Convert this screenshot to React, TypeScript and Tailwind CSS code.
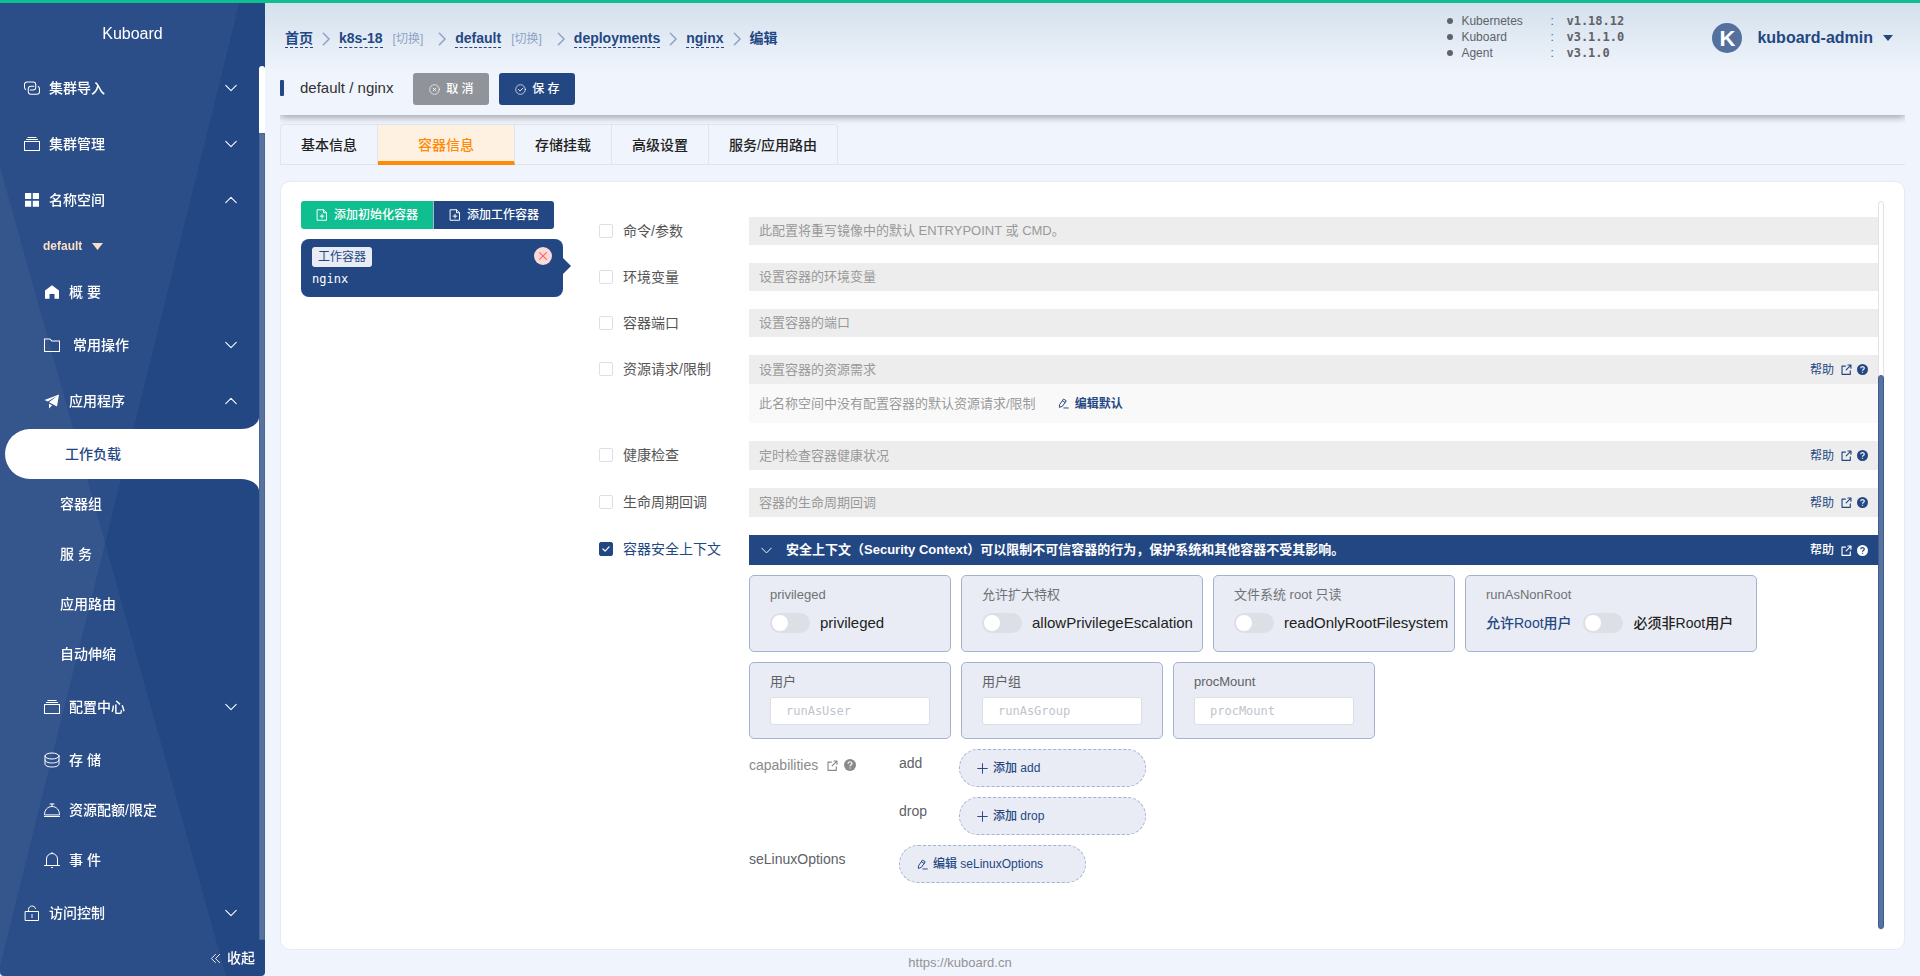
import { Fragment, useState } from "react";
import type { ReactNode } from "react";
import clsx from "clsx";

type IconProps = { className?: string };

/* ---------- icons ---------- */

function Glyph({ d, className }: { d: string; className?: string }) {
  return (
    <svg viewBox="0 0 1024 1024" fill="currentColor" className={clsx("shrink-0", className)} aria-hidden="true">
      <path d={d} />
    </svg>
  );
}

function Line({ children, className }: { children: ReactNode; className?: string }) {
  return (
    <svg
      viewBox="0 0 16 16"
      fill="none"
      stroke="currentColor"
      strokeLinecap="round"
      strokeLinejoin="round"
      className={clsx("shrink-0", className)}
      aria-hidden="true"
    >
      {children}
    </svg>
  );
}

const ConnectionIcon = ({ className }: IconProps) => (
  <Glyph
    className={className}
    d="M656 360v64H448a144 144 0 0 0-144 144v160a144 144 0 0 0 144 144h368a144 144 0 0 0 144-144V568a144 144 0 0 0-72-124V370c84 30 136 110 136 198v160a208 208 0 0 1-208 208H448a208 208 0 0 1-208-208V568a208 208 0 0 1 208-208h208zM368 664v-64h208a144 144 0 0 0 144-144V296a144 144 0 0 0-144-144H208a144 144 0 0 0-144 144v160a144 144 0 0 0 72 124v78A208 208 0 0 1 0 456V296a208 208 0 0 1 208-208h368a208 208 0 0 1 208 208v160a208 208 0 0 1-208 208H368z"
  />
);
const FilesIcon = ({ className }: IconProps) => (
  <Glyph
    className={className}
    d="M64 384v512h896V384H64zm-64-64h1024v640H0V320zm128-128h768v64H128zm96-128h576v64H224z"
  />
);
const MenuIcon = ({ className }: IconProps) => (
  <Glyph className={className} d="M64 64h400v384H64zM560 64h400v384H560zM64 560h400v384H64zM560 560h400v384H560z" />
);
const HomeIcon = ({ className }: IconProps) => (
  <Glyph className={className} d="M512 80 64 420V944h288V640h320v304h288V420z" />
);
const FolderIcon = ({ className }: IconProps) => (
  <Glyph
    className={className}
    d="M64 160v736h896V288H485.76L357.504 160H64zM0 96h383.872l128.384 128H1024v736H0V96z"
  />
);
const PromotionIcon = ({ className }: IconProps) => (
  <Glyph
    className={className}
    d="m32 448 928-352-128 768-510.08-275.328L832 192 242.816 545.472 32 448zm288 544V680l200 110L320 992z"
  />
);
const StackIcon = ({ className }: IconProps) => (
  <Line className={className}>
    <ellipse cx="8" cy="4" rx="7" ry="3" />
    <path d="M1 4v8c0 1.7 3.1 3 7 3s7-1.3 7-3V4M1 8c0 1.7 3.1 3 7 3s7-1.3 7-3" />
  </Line>
);
const DishIcon = ({ className }: IconProps) => (
  <Line className={className}>
    <path d="M.5 12.500C.5 8 3.500 4.500 8 4.500s7.500 3.500 7.500 8zM.5 14.500h15M6 2h4M8 2v2" />
  </Line>
);
const BellIcon = ({ className }: IconProps) => (
  <Line className={className}>
    <path d="M2.500 13V7a5.500 5.500 0 0 1 11 0v6M.5 13.500h15M7.500 15.500h1M8 .5v1" />
  </Line>
);
const UnlockIcon = ({ className }: IconProps) => (
  <Line className={className}>
    <path d="M1.500 6.500h13v9h-13zM4.500 6.500V4.500c0-4 6-5 7-1M8 9.500v3" />
  </Line>
);
const ChevronDown = ({ className }: IconProps) => (
  <Line className={className}>
    <path d="m1 4.500 7 7 7-7" strokeWidth="1.400" />
  </Line>
);
const ChevronRight = ({ className }: IconProps) => (
  <Line className={className}>
    <path d="m5 1.500 6.500 6.500L5 14.500" strokeWidth="1.800" />
  </Line>
);
const DoubleLeft = ({ className }: IconProps) => (
  <Line className={className}>
    <path d="M8 2 2 8l6 6M14 2 8 8l6 6" strokeWidth="1.300" />
  </Line>
);
const CircleClose = ({ className }: IconProps) => (
  <Line className={className}>
    <circle cx="8" cy="8" r="7" />
    <path d="m6 6 4 4M10 6l-4 4" strokeWidth="1.300" />
  </Line>
);
const CircleCheck = ({ className }: IconProps) => (
  <Line className={className}>
    <circle cx="8" cy="8" r="7" />
    <path d="m5 8 2.300 2.300L11.500 6" strokeWidth="1.300" />
  </Line>
);
const DocumentAdd = ({ className }: IconProps) => (
  <Line className={className}>
    <path d="M2 1h8l4 4v10H2zM10 1v4h4M8 7v5M5.500 9.500h5" strokeWidth="1.300" />
  </Line>
);
const CloseIcon = ({ className }: IconProps) => (
  <Line className={className}>
    <path d="m2.500 2.500 11 11M13.500 2.500l-11 11" strokeWidth="1.900" />
  </Line>
);
const PlusIcon = ({ className }: IconProps) => (
  <Line className={className}>
    <path d="M8 1v14M1 8h14" strokeWidth="1.400" />
  </Line>
);
const EditIcon = ({ className }: IconProps) => (
  <Line className={className}>
    <path d="m2.500 9.500 5.500-8 4 2.500-5.500 8-4 1.500zM8.500 14.500H15M6.500 4l4 2.500" strokeWidth="1.400" />
  </Line>
);
const ExternalIcon = ({ className }: IconProps) => (
  <Line className={className}>
    <path d="M6.500 3H1.500v12h12v-5M10 1.500h4.500V6M14 2 7.500 8.500" strokeWidth="1.700" />
  </Line>
);

function QuestionIcon({ className }: IconProps) {
  return (
    <svg viewBox="0 0 16 16" className={clsx("shrink-0", className)} aria-hidden="true">
      <circle cx="8" cy="8" r="8" fill="currentColor" />
      <path
        d="M5.500 6.300C5.500 3 10.500 3 10.500 6.200 10.500 8 8 7.800 8 9.700M8 11.300v1.300"
        fill="none"
        className="stroke-[#ececec]"
        strokeWidth="1.900"
      />
    </svg>
  );
}

function Caret({ className }: IconProps) {
  return (
    <svg viewBox="0 0 10 6" fill="currentColor" preserveAspectRatio="none" className={className} aria-hidden="true">
      <path d="M0 0h10L5 6z" />
    </svg>
  );
}

/* ---------- sidebar ---------- */

type MenuProps = { icon: ReactNode; label: string; nested?: boolean; open?: boolean; leaf?: boolean };

function MenuItem({ icon, label, nested, open, leaf }: MenuProps) {
  return (
    <a
      href="#"
      className={clsx(
        "flex items-center gap-[9px] pr-[22px] text-sm font-medium",
        nested ? "pl-11" : "pl-6",
        leaf ? "h-[50px]" : "h-14",
      )}
    >
      {icon}
      <span className="flex-1">{label}</span>
      {!leaf && <ChevronDown className={clsx("size-3", open && "rotate-180")} />}
    </a>
  );
}

const workloadLinks = ["容器组", "服 务", "应用路由", "自动伸缩"];

function Sidebar() {
  return (
    <aside className="fixed inset-y-0 left-0 z-10 flex w-[265px] flex-col overflow-hidden rounded-b-sm bg-[#234783] text-white">
      <svg viewBox="0 0 265 976" preserveAspectRatio="none" className="absolute inset-0 h-full w-full" aria-hidden="true">
        <path d="M0 0H240L0 966z" fill="#fff" fillOpacity=".045" />
        <path d="M0 167 226 976H0z" fill="#fff" fillOpacity=".045" />
      </svg>
      <div className="relative flex h-[60px] shrink-0 items-center justify-center pt-2 font-medium">Kuboard</div>
      <div className="relative flex min-h-0 flex-1">
        <nav className="min-w-0 flex-1">
          <MenuItem icon={<ConnectionIcon className="size-4" />} label="集群导入" />
          <MenuItem icon={<FilesIcon className="size-4" />} label="集群管理" />
          <MenuItem icon={<MenuIcon className="size-4" />} label="名称空间" open />
          <button className="flex h-[39px] items-center gap-[10px] pb-[3px] pl-[43px] text-xs font-bold text-[#fbdfc5]">
            default
            <Caret className="h-[7px] w-[11px]" />
          </button>
          <MenuItem icon={<HomeIcon className="size-4" />} label="概 要" nested leaf />
          <MenuItem icon={<FolderIcon className="size-4" />} label={"\u00a0常用操作"} nested />
          <MenuItem icon={<PromotionIcon className="size-4" />} label="应用程序" nested open />
          <a
            href="#"
            className="relative ml-[5px] flex h-[50px] items-center rounded-l-full bg-white pl-[60px] text-sm font-medium text-[#234783]"
          >
            工作负载
            <svg viewBox="0 0 18 11" fill="#fff" className="absolute right-0 bottom-full h-[11px] w-[18px]" aria-hidden="true">
              <path d="M0 11C10 11 17 6 18 0V11z" />
            </svg>
            <svg viewBox="0 0 18 11" fill="#fff" className="absolute top-full right-0 h-[11px] w-[18px]" aria-hidden="true">
              <path d="M0 0C10 0 17 5 18 11V0z" />
            </svg>
          </a>
          {workloadLinks.map((label) => (
            <a key={label} href="#" className="flex h-[50px] items-center pl-[60px] text-sm font-medium">
              {label}
            </a>
          ))}
          <MenuItem icon={<FilesIcon className="size-4" />} label="配置中心" nested />
          <MenuItem icon={<StackIcon className="size-4" />} label="存 储" nested leaf />
          <MenuItem icon={<DishIcon className="size-4" />} label="资源配额/限定" nested leaf />
          <MenuItem icon={<BellIcon className="size-4" />} label="事 件" nested leaf />
          <MenuItem icon={<UnlockIcon className="size-4" />} label="访问控制" />
        </nav>
        <div className="mt-[6px] flex w-[6px] flex-col rounded-t-[3px] bg-white">
          <div className="mt-[67px] flex-1 border border-[#4a6592] bg-[#5872a0]" />
        </div>
      </div>
      <button className="relative flex h-9 shrink-0 items-center justify-end gap-[6px] pr-[10px] text-sm font-medium">
        <DoubleLeft className="size-[11px]" />
        收起
      </button>
    </aside>
  );
}

/* ---------- header ---------- */

const crumbs = [
  { label: "首页", link: true },
  { label: "k8s-18", link: true, change: true },
  { label: "default", link: true, change: true },
  { label: "deployments", link: true },
  { label: "nginx", link: true },
  { label: "编辑" },
];

const versions = [
  ["Kubernetes", "v1.18.12"],
  ["Kuboard", "v3.1.1.0"],
  ["Agent", "v3.1.0"],
];

function Header() {
  return (
    <header className="flex h-[73px] items-center bg-linear-to-b from-[#d3e0ec] to-[#f0f4fc] pt-[3px] pr-[27px] pl-5">
      <nav className="flex items-center pt-px text-sm font-bold text-[#234783]">
        {crumbs.map((c, i) => (
          <Fragment key={c.label}>
            {i > 0 && <ChevronRight className="mx-[6px] size-[14px] text-[#8fa3c4]" />}
            {c.link ? (
              <a href="#" className="border-b border-dashed border-[#234783] leading-[17px]">
                {c.label}
              </a>
            ) : (
              <span className="leading-[17px]">{c.label}</span>
            )}
            {c.change && (
              <button className="mr-[6px] ml-[10px] text-xs font-normal text-[#8fa3c4]">[切换]</button>
            )}
          </Fragment>
        ))}
      </nav>
      <ul className="ml-auto pb-[2px] text-xs leading-4 text-[#606266]">
        {versions.map(([name, version]) => (
          <li key={name} className="flex items-center">
            <span className="mr-2 size-[6px] rounded-full bg-[#606266]" />
            <span className="w-[89px]">{name}</span>
            <span className="w-4">:</span>
            <span className="w-[146px] font-['DejaVu_Sans_Mono',monospace] font-bold">{version}</span>
          </li>
        ))}
      </ul>
      <span className="flex size-[30px] items-center justify-center rounded-full bg-[#54709f] text-[22px] font-bold text-white">
        K
      </span>
      <button className="ml-[15px] flex items-center gap-[10px] text-base font-bold text-[#234783]">
        kuboard-admin
        <Caret className="h-[6px] w-[10px]" />
      </button>
    </header>
  );
}

const tabs = ["基本信息", "容器信息", "存储挂载", "高级设置", "服务/应用路由"];

function Tabs({ active, onChange }: { active: string; onChange: (tab: string) => void }) {
  return (
    <div className="flex h-[41px] border-b border-[#dfe4ed]">
      <div role="tablist" className="flex rounded-t-sm border-t border-l border-[#dfe4ed]">
        {tabs.map((tab) => (
          <button
            key={tab}
            role="tab"
            aria-selected={tab === active}
            onClick={() => onChange(tab)}
            className={clsx(
              "h-10 border-r border-[#dfe4ed] text-sm font-medium",
              tab === active
                ? "border-b-4 border-b-[#ff8a08] bg-[#fff1e2] px-10 pt-1 text-[#ff8a08]"
                : "px-5 text-[#222]",
            )}
          >
            {tab}
          </button>
        ))}
      </div>
    </div>
  );
}

/* ---------- container form ---------- */

function Help({ inverse }: { inverse?: boolean }) {
  return (
    <a
      href="#"
      className={clsx("ml-auto flex items-center text-xs", inverse ? "font-medium text-white" : "text-[#234783]")}
    >
      帮助
      <ExternalIcon className="mr-[5px] ml-[7px] size-[11px]" />
      <QuestionIcon className={clsx("size-[11px]", inverse && "[&>path]:stroke-[#234783]")} />
    </a>
  );
}

type RowProps = { id: string; label: string; checked?: boolean; children: ReactNode };

function Row({ id, label, checked, children }: RowProps) {
  return (
    <div className="flex">
      <div className="flex h-7 w-[150px] shrink-0 items-center">
        <span className="relative flex size-[14px]">
          <input
            id={id}
            type="checkbox"
            defaultChecked={checked}
            className="peer size-[14px] appearance-none rounded-xs border border-[#dcdfe6] bg-white checked:border-[#234783] checked:bg-[#234783]"
          />
          <Line className="pointer-events-none absolute inset-0 hidden size-[14px] text-white peer-checked:block">
            <path d="m4.500 8 2.500 2.500 4.500-5" strokeWidth="1.400" />
          </Line>
        </span>
        <label htmlFor={id} className={clsx("pl-[10px] text-sm", checked ? "text-[#234783]" : "text-[#555]")}>
          {label}
        </label>
      </div>
      <div className="min-w-0 flex-1">{children}</div>
    </div>
  );
}

function Bar({ text, help }: { text: string; help?: boolean }) {
  return (
    <div
      className={clsx(
        "flex items-center bg-[#ededed] pr-[10px] pl-[10px] text-[13px] text-[#999]",
        help ? "h-[29px]" : "h-7",
      )}
    >
      {text}
      {help && <Help />}
    </div>
  );
}

function Box({ className, children }: { className: string; children: ReactNode }) {
  return (
    <div className={clsx("h-[77px] rounded-[5px] border border-[#a3b3cf] bg-[#e9ecf4] px-5 pt-[9px]", className)}>
      {children}
    </div>
  );
}

const switchClass =
  "relative h-5 w-10 shrink-0 appearance-none rounded-full bg-[#dcdfe6] before:absolute before:top-[2px] before:left-[2px] before:size-4 before:rounded-full before:bg-white checked:bg-[#234783] checked:before:left-[22px]";

function SwitchBox({ className, title, name }: { className: string; title: string; name: string }) {
  return (
    <Box className={className}>
      <div className="text-[13px] leading-5 text-[#707275]">{title}</div>
      <label className="mt-2 flex h-5 items-center gap-[10px] text-[15px] font-medium text-[#222]">
        <input type="checkbox" className={switchClass} />
        {name}
      </label>
    </Box>
  );
}

function InputBox({ title, name }: { title: string; name: string }) {
  return (
    <Box className="w-[202px]">
      <label htmlFor={name} className="block text-[13px] leading-5 text-[#606266]">
        {title}
      </label>
      <input
        id={name}
        placeholder={name}
        className="mt-[5px] block h-7 w-full rounded-[3px] border border-[#dcdfe6] bg-white px-[15px] font-['DejaVu_Sans_Mono',monospace] text-xs text-[#606266] placeholder:text-[#c0c4cc]"
      />
    </Box>
  );
}

function DashedButton({ icon, children }: { icon: ReactNode; children: ReactNode }) {
  return (
    <button className="flex h-[38px] w-[187px] items-center gap-[5px] rounded-full border border-dashed border-[#a3b3cf] bg-[#e9ecf4] pl-[17px] text-xs font-medium text-[#234783]">
      {icon}
      {children}
    </button>
  );
}

function SecurityContext() {
  return (
    <>
      <div className="flex h-[30px] items-center bg-[#234783] pr-[10px] pl-3 text-[13px] font-bold text-white">
        <ChevronDown className="mr-[14px] size-[11px]" />
        安全上下文（Security Context）可以限制不可信容器的行为，保护系统和其他容器不受其影响。
        <Help inverse />
      </div>
      <div className="mt-[10px] flex flex-wrap gap-[10px]">
        <SwitchBox className="w-[202px]" title="privileged" name="privileged" />
        <SwitchBox className="w-[242px]" title="允许扩大特权" name="allowPrivilegeEscalation" />
        <SwitchBox className="w-[242px]" title="文件系统 root 只读" name="readOnlyRootFilesystem" />
        <Box className="w-[292px]">
          <div className="text-[13px] leading-5 text-[#707275]">runAsNonRoot</div>
          <label className="mt-2 flex h-5 items-center gap-[11px] text-sm font-medium text-[#222]">
            <span className="text-[#234783]">允许Root用户</span>
            <input type="checkbox" className={switchClass} />
            必须非Root用户
          </label>
        </Box>
      </div>
      <div className="mt-[10px] flex flex-wrap gap-[10px]">
        <InputBox title="用户" name="runAsUser" />
        <InputBox title="用户组" name="runAsGroup" />
        <InputBox title="procMount" name="procMount" />
      </div>
      <div className="mt-[10px] flex text-sm text-[#606266]">
        <a href="#" className="flex h-8 w-[150px] items-center text-[#8a8a8a]">
          capabilities
          <ExternalIcon className="mr-[6px] ml-[9px] size-[11px]" />
          <QuestionIcon className="size-3" />
        </a>
        <div className="flex flex-col gap-[10px]">
          <div className="flex">
            <span className="w-[60px] leading-7">add</span>
            <DashedButton icon={<PlusIcon className="size-[11px]" />}>添加 add</DashedButton>
          </div>
          <div className="flex">
            <span className="w-[60px] leading-7">drop</span>
            <DashedButton icon={<PlusIcon className="size-[11px]" />}>添加 drop</DashedButton>
          </div>
        </div>
      </div>
      <div className="mt-[10px] flex text-sm text-[#606266]">
        <span className="w-[150px] leading-7">seLinuxOptions</span>
        <DashedButton icon={<EditIcon className="size-[11px]" />}>编辑 seLinuxOptions</DashedButton>
      </div>
    </>
  );
}

function ContainerList() {
  return (
    <div className="w-[298px] shrink-0">
      <div className="flex text-xs font-medium text-white">
        <button className="flex h-7 w-[132px] items-center justify-center gap-[6px] rounded-l-[3px] bg-[#10bf8f]">
          <DocumentAdd className="size-3" />
          添加初始化容器
        </button>
        <button className="flex h-7 w-[121px] items-center justify-center gap-[6px] rounded-r-[3px] border-l border-[#a7b5cd] bg-[#234783]">
          <DocumentAdd className="size-3" />
          添加工作容器
        </button>
      </div>
      <div className="relative mt-[10px] flex h-[58px] w-[262px] items-start justify-between rounded-lg bg-[#234783] pt-2 pr-[11px] pl-[11px]">
        <div>
          <span className="block h-5 rounded-[3px] bg-[#e9ecf4] px-[6px] text-xs leading-5 text-[#234783]">工作容器</span>
          <div className="mt-1 font-['DejaVu_Sans_Mono',monospace] text-xs leading-4 text-white">nginx</div>
        </div>
        <button
          aria-label="删除"
          className="flex size-[18px] items-center justify-center rounded-full bg-[#fcd9da] text-[#f56c6c]"
        >
          <CloseIcon className="size-[10px]" />
        </button>
        <svg viewBox="0 0 8 16" className="absolute top-[19px] left-full h-4 w-2" fill="#234783" aria-hidden="true">
          <path d="M0 0 8 8 0 16z" />
        </svg>
      </div>
    </div>
  );
}

export default function App() {
  const [tab, setTab] = useState("容器信息");

  return (
    <div className="flex min-h-screen flex-col bg-[#f0f4fc] font-['Liberation_Sans','Noto_Sans_CJK_SC',sans-serif]">
      <div className="fixed inset-x-0 top-0 z-20 h-[3px] bg-[#10bf8f]" />
      <Sidebar />
      <div className="flex flex-1 flex-col pl-[265px]">
        <Header />
        <main className="flex flex-1 flex-col px-[15px]">
          <div className="flex h-[42px] items-start text-[#303133]">
            <span className="mt-[7px] h-4 w-1 rounded-[1px] bg-[#234783]" />
            <h1 className="ml-4 text-[15px] leading-[30px]">default / nginx</h1>
            <button className="ml-5 flex h-8 w-[76px] items-center justify-center gap-[6px] rounded-[3px] bg-[#909399] text-xs font-medium text-white">
              <CircleClose className="size-[11px]" />取 消
            </button>
            <button className="ml-[10px] flex h-8 w-[76px] items-center justify-center gap-[6px] rounded-[3px] bg-[#234783] text-xs font-medium text-white">
              <CircleCheck className="size-[11px]" />保 存
            </button>
          </div>
          <div className="h-[9px] overflow-hidden">
            <div className="-mt-1 h-1 shadow-[0_0_9px_rgba(0,0,0,0.75)]" />
          </div>
          <Tabs active={tab} onChange={setTab} />

          <section className="mt-4 flex flex-1 rounded-[10px] border border-[#e6eaf2] bg-white px-5 py-[19px]">
            <ContainerList />
            <div className="flex min-w-0 flex-1 flex-col gap-[18px] pt-4">
              <Row id="command" label="命令/参数">
                <Bar text="此配置将重写镜像中的默认 ENTRYPOINT 或 CMD。" />
              </Row>
              <Row id="env" label="环境变量">
                <Bar text="设置容器的环境变量" />
              </Row>
              <Row id="ports" label="容器端口">
                <Bar text="设置容器的端口" />
              </Row>
              <Row id="resources" label="资源请求/限制">
                <Bar text="设置容器的资源需求" help />
                <div className="flex h-[39px] items-center bg-[#f9f9f9] pl-[10px] text-[13px] text-[#999]">
                  此名称空间中没有配置容器的默认资源请求/限制
                  <button className="ml-[22px] flex items-center gap-[6px] text-xs font-bold text-[#234783]">
                    <EditIcon className="size-[11px]" />
                    编辑默认
                  </button>
                </div>
              </Row>
              <Row id="health" label="健康检查">
                <Bar text="定时检查容器健康状况" help />
              </Row>
              <Row id="lifecycle" label="生命周期回调">
                <Bar text="容器的生命周期回调" help />
              </Row>
              <Row id="security" label="容器安全上下文" checked>
                <SecurityContext />
              </Row>
            </div>
            <div className="flex w-[6px] shrink-0 flex-col rounded-[3px] border border-[#e2e2e2] bg-white">
              <div className="-mx-px mt-[173px] flex-1 rounded-[3px] border border-[#3f5f93] bg-[#5872a0]" />
            </div>
          </section>
        </main>
      </div>
      <footer className="flex h-[26px] items-center justify-center text-[13px] text-[#909399]">https://kuboard.cn</footer>
    </div>
  );
}
